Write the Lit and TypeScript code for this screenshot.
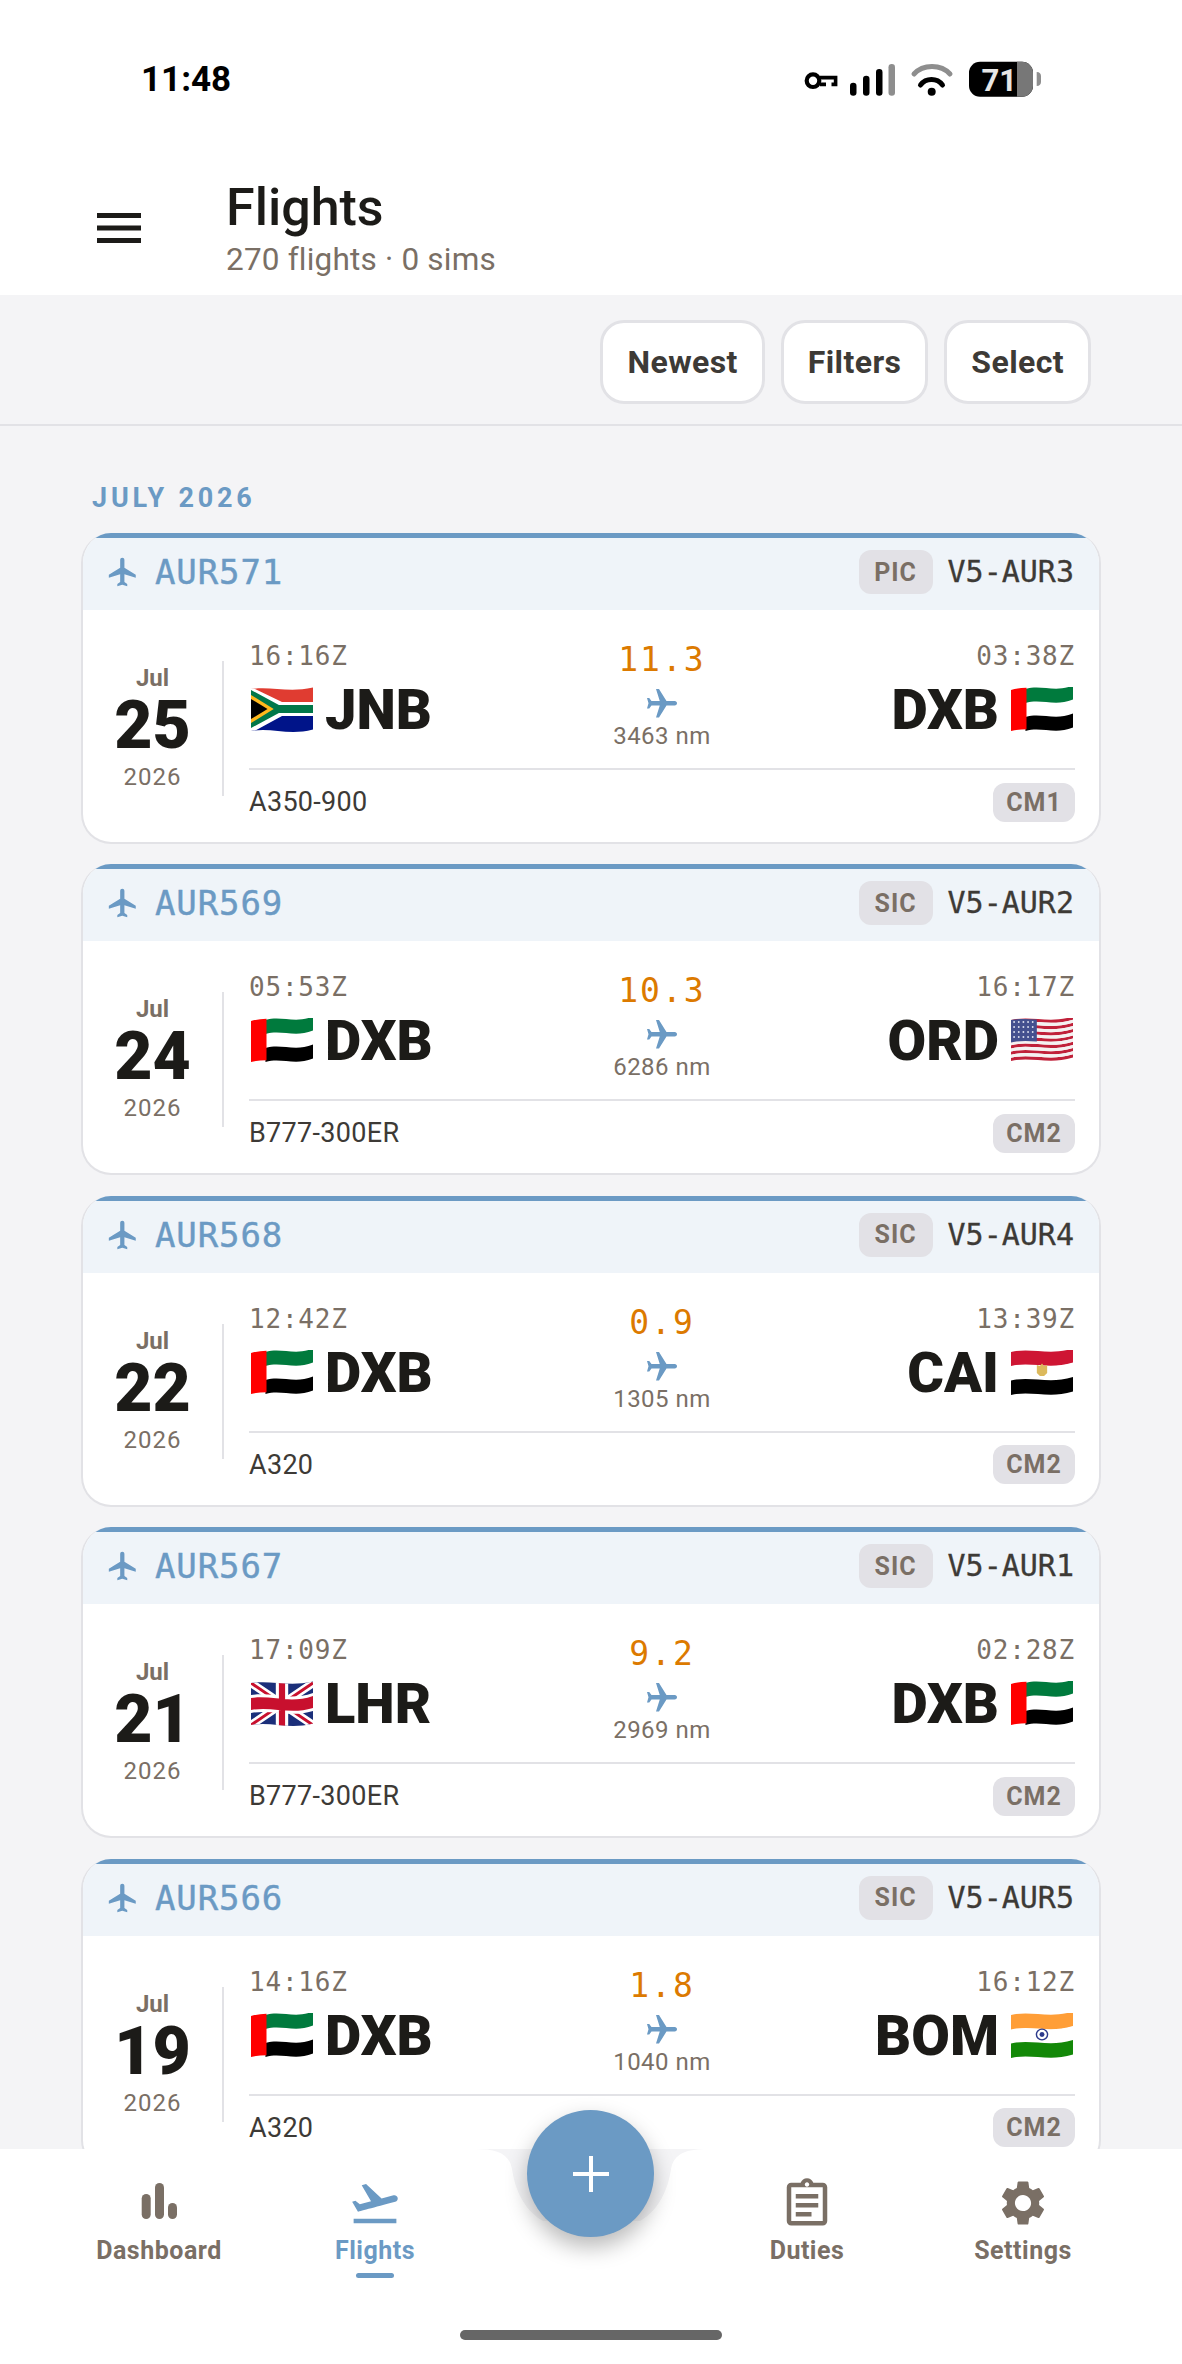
import { LitElement, css, html, svg } from "lit";
import { customElement } from "lit/decorators.js";

const FLIGHT = "M21 16v-2l-8-5V3.5c0-.83-.67-1.5-1.5-1.5S10 2.67 10 3.5V9l-8 5v2l8-2.5V19l-2 1.5V22l3.5-1 3.5 1v-1.5L13 19v-5.5l8 2.5z";

// wavy horizontal stripe, used by all the flag drawings
const band = (top: number, bottom: number, fill: string, x1 = 0, x2 = 60) => {
  const w = x2 - x1;
  const edge = (y: number) => `C${x1 + w * 0.33} ${y - 3} ${x1 + w * 0.6} ${y + 6} ${x2} ${y - 1.5}`;
  const back = (y: number) => `C${x1 + w * 0.6} ${y + 6} ${x1 + w * 0.33} ${y - 3} ${x1} ${y + 2}`;
  return svg`<path fill=${fill} d="M${x1} ${top + 2}${edge(top)}L${x2} ${bottom - 1.5}${back(bottom)}Z"/>`;
};

const FLAGS: Record<string, unknown> = {
  AE: svg`${band(0, 15, "#007a3d", 14)}${band(14, 29, "#fff", 14)}${band(28, 42, "#000", 14)}
    <path fill="#ff0000" d="M0 3C5 1.5 10 1 15 .8V42.2C10 42.2 5 42.6 0 44Z"/>`,
  ZA: svg`<g clip-path="url(#za)">
      <path fill="#e03c31" d="M0 0H60V20H0Z"/><path fill="#001489" d="M0 24H60V46H0Z"/>
      <path fill="#fff" d="M0 0L30 15H60V29H30L0 46Z"/>
      <path fill="#007749" d="M0 3L27 18H60V26H27L0 41Z"/>
      <path fill="#ffb81c" d="M0 8L22 22L0 36Z"/><path fill="#000" d="M0 12L16 22L0 32Z"/>
    </g>
    <clipPath id="za"><path d="M0 2C20 -1 36 6 60 .5V42.5C36 49 20 40 0 44Z"/></clipPath>`,
  US: svg`${[0, 1, 2, 3, 4, 5, 6].map((i) => band(i * 6.3, i * 6.3 + 3.2, "#c0213a"))}
    ${[0, 1, 2, 3, 4, 5].map((i) => band(i * 6.3 + 3.2, i * 6.3 + 6.3, "#f4f1f1"))}
    <path fill="#44508f" d="M0 2C8 .6 16 .6 25 1.6V23.6C16 22.6 8 22.6 0 24.4Z"/>
    ${[4, 9, 14, 19].flatMap((y) =>
      [3, 7.5, 12, 16.5, 21].map((x) => svg`<circle cx=${x} cy=${y} r=".9" fill="#dfe2f0"/>`))}`,
  EG: svg`${band(0, 14.5, "#ce1533")}${band(14, 29, "#fff")}${band(28.5, 43, "#000")}
    <path fill="#dcb95c" d="M30 13.5l2 2.5 3-1v8l-3 3h-4l-3-3v-8l3 1z"/>`,
  GB: svg`<g clip-path="url(#gb)">
      <path fill="#1b2f7a" d="M0 0H60V46H0Z"/>
      <path stroke="#fff" stroke-width="8" d="M0 2L60 44M60 2L0 44"/>
      <path stroke="#c8102e" stroke-width="3" d="M0 2L60 44M60 2L0 44"/>
      <path fill="#fff" d="M0 14C20 11 38 20 60 12V30C38 37 20 28 0 32ZM24 0H36V46H24Z"/>
      <path fill="#c8102e" d="M0 17C20 14 38 23 60 15V27C38 34 20 25 0 29ZM27 0H33V46H27Z"/>
    </g>
    <clipPath id="gb"><path d="M0 2C20 -1 36 6 60 .5V42.5C36 49 20 40 0 44Z"/></clipPath>`,
  IN: svg`${band(0, 15, "#ff9e37")}${band(14.5, 29, "#fff")}${band(28.5, 43, "#138808")}
    <circle cx="30" cy="21.5" r="5.4" fill="none" stroke="#2c3a8c" stroke-width="1.4"/>
    <circle cx="30" cy="21.5" r="2.4" fill="#2c3a8c"/>`,
};

const flag = (code: string) =>
  html`<svg class="flag" viewBox="0 0 60 46" preserveAspectRatio="none">${FLAGS[code]}</svg>`;

type Flight = {
  no: string; role: string; reg: string; month: string; day: string; year: string;
  dep: string; depFlag: string; depTime: string;
  arr: string; arrFlag: string; arrTime: string;
  hours: string; dist: string; type: string; crew: string;
};

const FLIGHTS: Flight[] = [
  { no: "AUR571", role: "PIC", reg: "V5-AUR3", month: "Jul", day: "25", year: "2026", dep: "JNB", depFlag: "ZA", depTime: "16:16Z", arr: "DXB", arrFlag: "AE", arrTime: "03:38Z", hours: "11.3", dist: "3463 nm", type: "A350-900", crew: "CM1" },
  { no: "AUR569", role: "SIC", reg: "V5-AUR2", month: "Jul", day: "24", year: "2026", dep: "DXB", depFlag: "AE", depTime: "05:53Z", arr: "ORD", arrFlag: "US", arrTime: "16:17Z", hours: "10.3", dist: "6286 nm", type: "B777-300ER", crew: "CM2" },
  { no: "AUR568", role: "SIC", reg: "V5-AUR4", month: "Jul", day: "22", year: "2026", dep: "DXB", depFlag: "AE", depTime: "12:42Z", arr: "CAI", arrFlag: "EG", arrTime: "13:39Z", hours: "0.9", dist: "1305 nm", type: "A320", crew: "CM2" },
  { no: "AUR567", role: "SIC", reg: "V5-AUR1", month: "Jul", day: "21", year: "2026", dep: "LHR", depFlag: "GB", depTime: "17:09Z", arr: "DXB", arrFlag: "AE", arrTime: "02:28Z", hours: "9.2", dist: "2969 nm", type: "B777-300ER", crew: "CM2" },
  { no: "AUR566", role: "SIC", reg: "V5-AUR5", month: "Jul", day: "19", year: "2026", dep: "DXB", depFlag: "AE", depTime: "14:16Z", arr: "BOM", arrFlag: "IN", arrTime: "16:12Z", hours: "1.8", dist: "1040 nm", type: "A320", crew: "CM2" },
];

@customElement("app-root")
export class AppRoot extends LitElement {
  static styles = css`
    :host {
      display: flex;
      flex-direction: column;
      position: relative;
      height: 2364px;
      overflow: hidden;
      background: #f4f4f6;
      font-family: Roboto, sans-serif;
      color: #1c1b18;
    }

    .status {
      flex: none;
      height: 160px;
      box-sizing: border-box;
      padding: 57px 0 0 141px;
      background: #fff;
      display: flex;
      align-items: flex-start;
      justify-content: space-between;
    }
    .time { font-size: 35px; font-weight: 700; line-height: 46px; color: #000; }
    .status svg { margin: 3px 139px 0 0; display: block; }

    .header {
      flex: none;
      height: 135px;
      background: #fff;
      display: flex;
      align-items: flex-start;
      padding-left: 97px;
    }
    .menu { margin-top: 53px; width: 44px; display: block; }
    .titles { margin-left: 85px; margin-top: 20px; }
    .title { font-size: 52px; font-weight: 500; line-height: 56px; color: #1c1b18; }
    .sub { font-size: 31.5px; line-height: 38px; color: #7a6f65; letter-spacing: 0.2px; margin-top: 5px; }

    .toolbar {
      flex: none;
      height: 131px;
      box-sizing: border-box;
      border-bottom: 2px solid #e2e2e6;
      display: flex;
      justify-content: flex-end;
      gap: 16px;
      padding: 25px 91px 0 0;
    }
    .btn {
      height: 84px;
      box-sizing: border-box;
      padding: 0 24px;
      display: flex;
      align-items: center;
      border: 3px solid #e2e2e6;
      border-radius: 24px;
      background: #fff;
      font-size: 32px;
      font-weight: 700;
      color: #3d3a36;
      letter-spacing: 0.4px;
    }

    .list { flex: 1; min-height: 0; overflow: hidden; padding: 0 81px; }
    .month {
      font-size: 27px;
      font-weight: 700;
      letter-spacing: 3.8px;
      color: #6b9ac4;
      line-height: 32px;
      padding: 56px 0 0 11px;
      margin-bottom: 19px;
    }

    .card {
      box-sizing: border-box;
      height: 311px;
      margin-bottom: 20.4px;
      background: #fff;
      border: 2px solid #e2e2e6;
      border-top: 0;
      border-radius: 30px;
      overflow: hidden;
    }
    .card-head {
      height: 77px;
      box-sizing: border-box;
      border-top: 5px solid #6b9ac4;
      background: #eff4f9;
      display: flex;
      align-items: center;
      padding: 0 25px 4px 23px;
    }
    .no-icon { width: 34px; height: 34px; fill: #6b9ac4; display: block; }
    .no {
      margin-left: 15px;
      font: 34px/1 "DejaVu Sans Mono", monospace;
      color: #6b9ac4;
      letter-spacing: 0.9px;
      -webkit-text-stroke: 0.4px #6b9ac4;
      flex: 1;
    }
    .pill {
      background: #e2e1e6;
      color: #7a6f65;
      font-size: 25px;
      font-weight: 700;
      letter-spacing: 1px;
      border-radius: 12px;
      display: flex;
      align-items: center;
      justify-content: center;
    }
    .role { width: 74px; height: 44px; margin-right: 15px; }
    .reg { font: 30px/1 "DejaVu Sans Mono", monospace; color: #3d3a36; -webkit-text-stroke: 0.3px #3d3a36; }

    .card-body { display: flex; height: 232px; }
    .date {
      flex: none;
      width: 139px;
      height: 135px;
      margin-top: 51px;
      border-right: 2px solid #e2e2e6;
      display: flex;
      flex-direction: column;
      align-items: center;
    }
    .mon { font-size: 24px; font-weight: 700; color: #7a6f65; line-height: 28px; margin-top: 3px; }
    .day { font-size: 66px; font-weight: 900; line-height: 66px; color: #1c1b18; margin-top: 1px; }
    .year { font-size: 24px; color: #7a6f65; line-height: 30px; letter-spacing: 1px; margin-top: 3px; }

    .detail { flex: 1; min-width: 0; margin-left: 25px; margin-right: 24px; }
    .route {
      height: 160px;
      box-sizing: border-box;
      border-bottom: 2px solid #e2e2e6;
      display: grid;
      grid-template-columns: 1fr auto 1fr;
      padding-top: 31px;
    }
    .end { display: flex; flex-direction: column; }
    .end.arr { align-items: flex-end; }
    .ztime { font: 26px/30px "DejaVu Sans Mono", monospace; color: #7a6f65; letter-spacing: 0.8px; }
    .code-row { display: flex; align-items: center; gap: 12px; margin-top: 14px; padding: 0 2px; }
    .code { font-size: 56px; font-weight: 900; line-height: 50px; color: #1c1b18; }
    .flag { width: 62px; height: 46px; display: block; flex: none; }
    .mid { display: flex; flex-direction: column; align-items: center; }
    .hours { font: 33px/38px "DejaVu Sans Mono", monospace; color: #dc7a00; letter-spacing: 2px; }
    .mid-icon { width: 36px; height: 36px; fill: #6b9ac4; transform: rotate(90deg); display: block; margin-top: 7px; }
    .dist { font-size: 24px; line-height: 30px; color: #7a6f65; letter-spacing: 0.5px; margin-top: -1px; }
    .foot { display: flex; align-items: center; justify-content: space-between; height: 64px; }
    .type { font-size: 27px; color: #3d3a36; letter-spacing: 0.3px; }
    .crew { width: 82px; height: 39px; }

    .nav {
      flex: none;
      position: relative;
      height: 215px;
      background: #fff;
    }
    .notch { position: absolute; left: 475px; top: 0; width: 233px; height: 100px; display: block; }
    .fab {
      position: absolute;
      left: 527px;
      top: -39px;
      width: 127px;
      height: 127px;
      border-radius: 50%;
      background: #6b9ac4;
      box-shadow: 0 10px 22px rgba(0, 0, 0, 0.28);
      display: flex;
      align-items: center;
      justify-content: center;
    }
    .fab svg { width: 38px; height: 38px; display: block; }
    .tabs { display: grid; grid-template-columns: 216px 216px 216px 216px 216px; padding-left: 51px; }
    .tab {
      height: 130px;
      display: flex;
      flex-direction: column;
      align-items: center;
      color: #7a6f65;
      fill: #7a6f65;
      padding-top: 27px;
      box-sizing: border-box;
      font-size: 25px;
      line-height: 30px;
      font-weight: 700;
      letter-spacing: 0.5px;
      position: relative;
    }
    .tab svg { width: 54px; height: 54px; display: block; margin-bottom: 6px; }
    .tab.on { color: #6b9ac4; fill: #6b9ac4; }
    .tab.on::after {
      content: "";
      position: absolute;
      left: 50%;
      top: 124px;
      width: 38px;
      height: 5px;
      margin-left: -19px;
      border-radius: 3px;
      background: #6b9ac4;
    }
    .home {
      position: absolute;
      left: 460px;
      top: 181px;
      width: 262px;
      height: 10px;
      border-radius: 5px;
      background: #666;
    }
  `;

  private statusIcons() {
    return html`<svg width="240" height="40" viewBox="0 0 240 40">
      <g fill="none" stroke="#000">
        <circle cx="10" cy="20.7" r="6.3" stroke-width="4.2"/>
        <path d="M17 17.6H32.6V24.4H28.5M23 24.4H17" stroke-width="3.6"/>
      </g>
      <g fill="#000">
        <rect x="47" y="22.7" width="6.5" height="13" rx="3.2"/>
        <rect x="60" y="15.7" width="6.5" height="20" rx="3.2"/>
        <rect x="73" y="9" width="6.5" height="26.7" rx="3.2"/>
      </g>
      <rect x="85.5" y="4" width="6.5" height="31.7" rx="3.2" fill="#8e8e8e"/>
      <path d="M111 14C120 4 138 4 147 14" fill="none" stroke="#8e8e8e" stroke-width="5" stroke-linecap="round"/>
      <path d="M117.5 25C123 17.7 134 17.7 139.5 25" fill="none" stroke="#000" stroke-width="5" stroke-linecap="round"/>
      <circle cx="128.7" cy="31.7" r="4" fill="#000"/>
      <rect x="166" y="1.7" width="64" height="35" rx="11" fill="#000"/>
      <path d="M214 1.7H219A11 11 0 0 1 230 12.7V25.7A11 11 0 0 1 219 36.7H214Z" fill="#777"/>
      <path d="M233.7 12c3 0 4.3 2 4.3 4v6c0 2-1.3 4-4.3 4Z" fill="#8e8e8e"/>
      <text x="214" y="31" text-anchor="end" font-family="Roboto, sans-serif" font-size="31" font-weight="700" fill="#e6e6e6">71</text>
    </svg>`;
  }

  private card(f: Flight) {
    return html`<div class="card">
      <div class="card-head">
        <svg class="no-icon" viewBox="0 0 24 24"><path d=${FLIGHT}/></svg>
        <div class="no">${f.no}</div>
        <div class="pill role">${f.role}</div>
        <div class="reg">${f.reg}</div>
      </div>
      <div class="card-body">
        <div class="date">
          <div class="mon">${f.month}</div>
          <div class="day">${f.day}</div>
          <div class="year">${f.year}</div>
        </div>
        <div class="detail">
          <div class="route">
            <div class="end">
              <div class="ztime">${f.depTime}</div>
              <div class="code-row">${flag(f.depFlag)}<div class="code">${f.dep}</div></div>
            </div>
            <div class="mid">
              <div class="hours">${f.hours}</div>
              <svg class="mid-icon" viewBox="0 0 24 24"><path d=${FLIGHT}/></svg>
              <div class="dist">${f.dist}</div>
            </div>
            <div class="end arr">
              <div class="ztime">${f.arrTime}</div>
              <div class="code-row"><div class="code">${f.arr}</div>${flag(f.arrFlag)}</div>
            </div>
          </div>
          <div class="foot">
            <div class="type">${f.type}</div>
            <div class="pill crew">${f.crew}</div>
          </div>
        </div>
      </div>
    </div>`;
  }

  render() {
    return html`
      <div class="status">
        <div class="time">11:48</div>
        ${this.statusIcons()}
      </div>
      <div class="header">
        <svg class="menu" viewBox="0 0 44 30" height="30">
          <path d="M0 2.5H44M0 15H44M0 27.5H44" stroke="#1c1b18" stroke-width="5"/>
        </svg>
        <div class="titles">
          <div class="title">Flights</div>
          <div class="sub">270 flights · 0 sims</div>
        </div>
      </div>
      <div class="toolbar">
        <div class="btn">Newest</div>
        <div class="btn">Filters</div>
        <div class="btn">Select</div>
      </div>
      <div class="list">
        <div class="month">JULY 2026</div>
        ${FLIGHTS.map((f) => this.card(f))}
      </div>
      <div class="nav">
        <svg class="notch" viewBox="0 0 233 100">
          <path fill="#f4f4f6" d="M0 0H233C212 0 199 4 196 20C193 40 185 60 165 72H68C48 60 40 40 37 20C34 4 21 0 0 0Z"/>
        </svg>
        <div class="tabs">
          <div class="tab">
            <svg viewBox="0 0 54 54">
              <rect x="9.7" y="18" width="9" height="25" rx="4.5"/>
              <rect x="23" y="7" width="9" height="36" rx="4.5"/>
              <rect x="36" y="27" width="9" height="16" rx="4.5"/>
            </svg>
            Dashboard
          </div>
          <div class="tab on">
            <svg viewBox="0 0 24 24">
              <path d="M2.5 19h19v2h-19v-2zm19.57-9.36c-.21-.8-1.04-1.28-1.84-1.06L14.92 10l-6.9-6.43-1.93.51 4.14 7.17-4.97 1.33-1.97-1.54-1.45.39 2.59 4.49s7.12-1.9 16.57-4.43c.81-.23 1.28-1.05 1.07-1.85z"/>
            </svg>
            Flights
          </div>
          <div></div>
          <div class="tab">
            <svg viewBox="0 0 24 24">
              <path d="M19 3h-4.18C14.4 1.84 13.3 1 12 1s-2.4.84-2.82 2H5c-1.1 0-2 .9-2 2v15c0 1.1.9 2 2 2h14c1.1 0 2-.9 2-2V5c0-1.1-.9-2-2-2zM12 2.75c.55 0 1 .45 1 1s-.45 1-1 1-1-.45-1-1 .45-1 1-1zM19 20H5V5h14v15zM7 8h10v2H7zm0 4h10v2H7zm0 4h7v2H7z"/>
            </svg>
            Duties
          </div>
          <div class="tab">
            <svg viewBox="0 0 24 24">
              <path d="M19.14 12.94c.04-.3.06-.61.06-.94 0-.32-.02-.64-.07-.94l2.03-1.58c.18-.14.23-.41.12-.61l-1.92-3.32c-.12-.22-.37-.29-.59-.22l-2.39.96c-.5-.38-1.03-.7-1.62-.94l-.36-2.54c-.04-.24-.24-.41-.48-.41h-3.84c-.24 0-.43.17-.47.41l-.36 2.54c-.59.24-1.13.57-1.62.94l-2.39-.96c-.22-.08-.47 0-.59.22L2.74 8.87c-.12.21-.08.47.12.61l2.03 1.58c-.05.3-.09.63-.09.94s.02.64.07.94l-2.03 1.58c-.18.14-.23.41-.12.61l1.92 3.32c.12.22.37.29.59.22l2.39-.96c.5.38 1.03.7 1.62.94l.36 2.54c.05.24.24.41.48.41h3.84c.24 0 .44-.17.47-.41l.36-2.54c.59-.24 1.13-.56 1.62-.94l2.39.96c.22.08.47 0 .59-.22l1.92-3.32c.12-.22.07-.47-.12-.61l-2.01-1.58zM12 15.6c-1.98 0-3.6-1.62-3.6-3.6s1.62-3.6 3.6-3.6 3.6 1.62 3.6 3.6-1.62 3.6-3.6 3.6z"/>
            </svg>
            Settings
          </div>
        </div>
        <div class="fab">
          <svg viewBox="0 0 38 38"><path d="M19 1V37M1 19H37" stroke="#fff" stroke-width="4"/></svg>
        </div>
        <div class="home"></div>
      </div>
    `;
  }
}
